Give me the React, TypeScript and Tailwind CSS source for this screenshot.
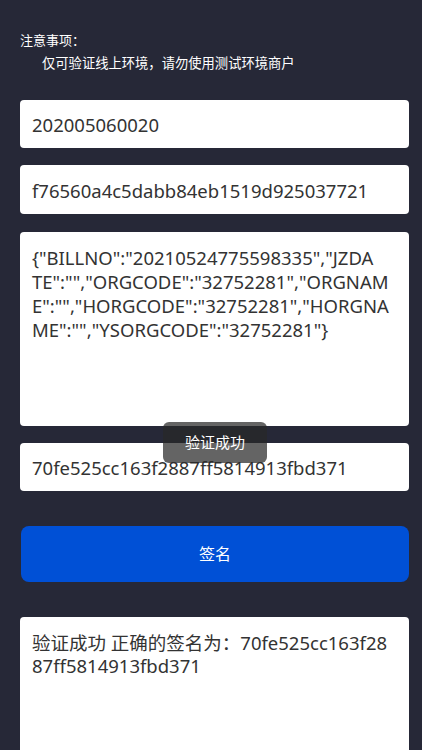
export default function App() {
  const font = "font-['Noto_Sans','Noto_Sans_CJK_SC',sans-serif]";

  // wrapped the way the reference textarea wraps it
  const jsonLines = [
    '{"BILLNO":"20210524775598335","JZDA',
    'TE":"","ORGCODE":"32752281","ORGNAM',
    'E":"","HORGCODE":"32752281","HORGNA',
    'ME":"","YSORGCODE":"32752281"}',
  ];

  return (
    <div className={`relative min-h-screen bg-[#262837] pl-5 pr-[13px] pt-[32px] ${font}`}>
      {/* notice */}
      <div className="text-[13px] leading-[17px] text-white">注意事项：</div>
      <div className="mt-[6px] pl-[22px] text-[13.3px] leading-[17px] text-white">
        仅可验证线上环境，请勿使用测试环境商户
      </div>

      <div className="mt-[28px] flex flex-col">
        <div className="flex h-[48px] items-center rounded bg-white px-3 pt-[2px] text-[18.5px] text-[#333]">
          202005060020
        </div>

        <div className="mt-[17px] flex h-[49px] items-center rounded bg-white px-3 pt-[2px] text-[18.5px] text-[#333]">
          f76560a4c5dabb84eb1519d925037721
        </div>

        <div className="mt-[18px] h-[194px] rounded bg-white px-3 pt-[14px] text-[18.5px] leading-[24px] text-[#333] break-all">
          {jsonLines.map((line, i) => (
            <span key={i} className="block">
              {line}
            </span>
          ))}
        </div>

        <div className="mt-[17px] flex h-[48px] items-center rounded bg-white px-3 pt-[2px] text-[18.5px] text-[#333]">
          70fe525cc163f2887ff5814913fbd371
        </div>

        <button className="ml-px mt-[35px] h-[56px] rounded-lg bg-[#0050d6] text-[16px] text-white">
          签名
        </button>

        <div className="mt-[35px] h-[160px] rounded bg-white px-3 pt-[14px] text-[18.5px] leading-[23px] text-[#333] break-all">
          验证成功 正确的签名为：70fe525cc163f2887ff5814913fbd371
        </div>
      </div>

      {/* toast */}
      <div className="absolute left-[163px] top-[422px] flex h-[41px] w-[104px] items-center justify-center rounded-md bg-[rgba(40,40,40,0.72)] text-[15px] text-white">
        验证成功
      </div>
    </div>
  );
}
